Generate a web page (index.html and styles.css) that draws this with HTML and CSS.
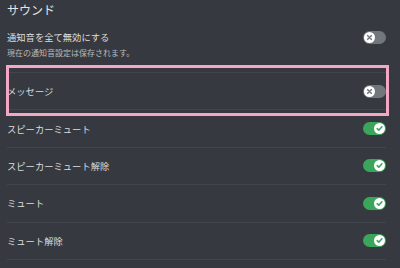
FILE: index.html
```html
<!DOCTYPE html>
<html lang="ja">
<head>
<meta charset="utf-8">
<link rel="stylesheet" href="styles.css">
</head>
<body>
<div class="page">
  <h2 class="title">サウンド</h2>
  <div class="row first">
    <div class="line">
      <span class="label">通知音を全て無効にする</span>
      <span class="toggle off"><span class="knob"><svg viewBox="0 0 11 11" width="11" height="11"><path d="M3.7 3.7 L7.3 7.3 M7.3 3.7 L3.7 7.3" stroke="#72767d" stroke-width="1.6" stroke-linecap="round"/></svg></span></span>
    </div>
    <div class="note">現在の通知音設定は保存されます。</div>
  </div>
  <div class="row">
    <span class="label">メッセージ</span>
    <span class="toggle off"><span class="knob"><svg viewBox="0 0 11 11" width="11" height="11"><path d="M3.7 3.7 L7.3 7.3 M7.3 3.7 L3.7 7.3" stroke="#72767d" stroke-width="1.6" stroke-linecap="round"/></svg></span></span>
  </div>
  <div class="row">
    <span class="label">スピーカーミュート</span>
    <span class="toggle on"><span class="knob"><svg viewBox="0 0 11 11" width="11" height="11"><path d="M3.2 5.7 L4.8 7.2 L7.9 3.8" fill="none" stroke="#3ba55c" stroke-width="1.6" stroke-linecap="round" stroke-linejoin="round"/></svg></span></span>
  </div>
  <div class="row">
    <span class="label">スピーカーミュート解除</span>
    <span class="toggle on"><span class="knob"><svg viewBox="0 0 11 11" width="11" height="11"><path d="M3.2 5.7 L4.8 7.2 L7.9 3.8" fill="none" stroke="#3ba55c" stroke-width="1.6" stroke-linecap="round" stroke-linejoin="round"/></svg></span></span>
  </div>
  <div class="row">
    <span class="label">ミュート</span>
    <span class="toggle on"><span class="knob"><svg viewBox="0 0 11 11" width="11" height="11"><path d="M3.2 5.7 L4.8 7.2 L7.9 3.8" fill="none" stroke="#3ba55c" stroke-width="1.6" stroke-linecap="round" stroke-linejoin="round"/></svg></span></span>
  </div>
  <div class="row">
    <span class="label">ミュート解除</span>
    <span class="toggle on"><span class="knob"><svg viewBox="0 0 11 11" width="11" height="11"><path d="M3.2 5.7 L4.8 7.2 L7.9 3.8" fill="none" stroke="#3ba55c" stroke-width="1.6" stroke-linecap="round" stroke-linejoin="round"/></svg></span></span>
  </div>
  <div class="highlight"></div>
</div>
</body>
</html>
```

FILE: styles.css
```css
html, body {
  margin: 0;
  padding: 0;
  background: #36393f;
}
body {
  width: 400px;
  height: 268px;
  overflow: hidden;
  font-family: "Noto Sans CJK JP", "Noto Sans", sans-serif;
}
.page {
  position: relative;
  padding: 0 14px 0 7px;
}
.title {
  margin: 0;
  height: 20px;
  line-height: 20px;
  font-size: 12px;
  font-weight: 400;
  color: #e3e5e8;
}
.row {
  display: flex;
  align-items: center;
  justify-content: space-between;
  height: 36.4px;
  border-bottom: 1px solid #42454b;
}
.row.first {
  display: block;
  height: auto;
  padding: 10px 0 14px;
}
.line {
  display: flex;
  align-items: center;
  justify-content: space-between;
  height: 14px;
}
.label {
  font-size: 9.3px;
  line-height: 14px;
  color: #dcddde;
}
.note {
  margin-top: 4px;
  font-size: 8px;
  line-height: 10px;
  color: #b9bbbe;
}
.toggle {
  position: relative;
  display: block;
  width: 23px;
  height: 13px;
  border-radius: 7px;
  flex: none;
}
.toggle.off { background: #72767d; }
.toggle.on { background: #3ba55c; }
.knob {
  position: absolute;
  top: 1px;
  width: 11px;
  height: 11px;
  border-radius: 50%;
  background: #ffffff;
}
.knob svg { display: block; }
.toggle.off .knob { left: 1px; }
.toggle.on .knob { right: 1px; }
.highlight {
  position: absolute;
  left: 6px;
  top: 65px;
  width: 377px;
  height: 45px;
  border: 3px solid #f2a7c5;
  pointer-events: none;
}
```
